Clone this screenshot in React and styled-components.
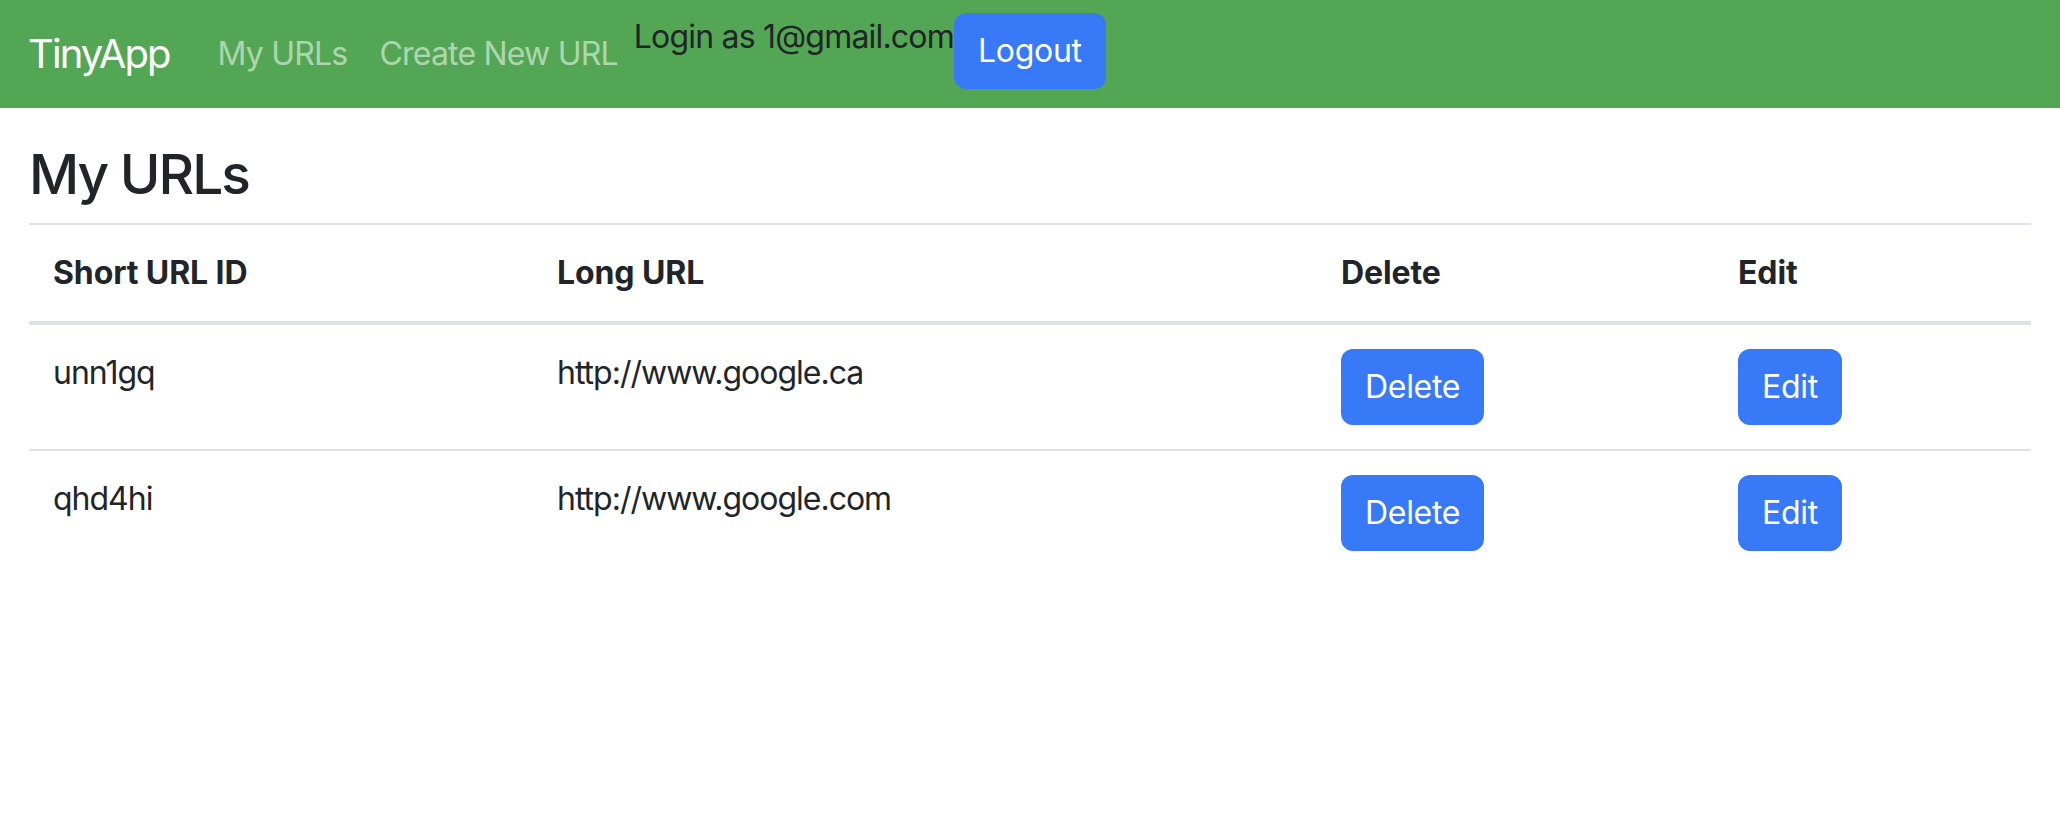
import React from "react"
import styled, { createGlobalStyle } from "styled-components"

const GlobalStyle = createGlobalStyle`
  * {
    box-sizing: border-box;
  }
  body {
    margin: 0;
    background: #fff;
    color: #212529;
    font-family: Inter, "Noto Sans", "Liberation Sans", sans-serif;
    font-size: 32px;
    line-height: 1.5;
  }
`

const Navbar = styled.nav`
  display: flex;
  align-items: center;
  height: 108px;
  padding: 0 28px;
  background: #53a653;
`

const Brand = styled.a`
  font-size: 40px;
  line-height: 1.5;
  color: #fff;
  text-decoration: none;
  margin-right: 32px;
  letter-spacing: -1.9px;
`

const NavLink = styled.a`
  padding: 0 16px;
  color: rgba(255, 255, 255, 0.55);
  text-decoration: none;
  letter-spacing: -0.8px;
`

const Account = styled.div`
  display: flex;
  align-items: flex-start;
  align-self: flex-start;
  margin-top: 13px;
`

const LoginText = styled.span`
  color: #212529;
  letter-spacing: -0.8px;
`

const Button = styled.button`
  font-family: inherit;
  font-size: 32px;
  line-height: 1.5;
  color: #fff;
  background: #3779f6;
  border: 2px solid #3779f6;
  border-radius: 12px;
  padding: 12px 22px;
  cursor: pointer;
  letter-spacing: -0.3px;
`

const Main = styled.main`
  padding: 0 29px;
`

const Title = styled.h3`
  margin: 33px 0 16px;
  font-size: 55px;
  font-weight: 500;
  line-height: 1.2;
  letter-spacing: -2px;
`

const Table = styled.table`
  width: 100%;
  border-collapse: collapse;
  table-layout: fixed;
  border-top: 2px solid #dee2e6;
`

const HeadCell = styled.th`
  width: ${(p) => p.$w}px;
  padding: 24px;
  text-align: left;
  font-weight: 700;
  border-bottom: 4px solid #dee2e6;
  letter-spacing: -0.1px;
`

const Row = styled.tr`
  border-bottom: 2px solid #dee2e6;
  &:last-child {
    border-bottom: 0;
  }
`

const Cell = styled.td`
  padding: 24px;
  vertical-align: top;
  letter-spacing: -1px;
`

const urls = [
  { id: "unn1gq", long: "http://www.google.ca" },
  { id: "qhd4hi", long: "http://www.google.com" },
]

export default function App() {
  return (
    <>
      <GlobalStyle />
      <Navbar>
        <Brand href="#">TinyApp</Brand>
        <NavLink href="#">My URLs</NavLink>
        <NavLink href="#">Create New URL</NavLink>
        <Account>
          <LoginText>Login as 1@gmail.com</LoginText>
          <Button>Logout</Button>
        </Account>
      </Navbar>
      <Main>
        <Title>My URLs</Title>
        <Table>
          <thead>
            <tr>
              <HeadCell $w={504}>Short URL ID</HeadCell>
              <HeadCell $w={784}>Long URL</HeadCell>
              <HeadCell $w={397}>Delete</HeadCell>
              <HeadCell $w={317}>Edit</HeadCell>
            </tr>
          </thead>
          <tbody>
            {urls.map((u) => (
              <Row key={u.id}>
                <Cell>{u.id}</Cell>
                <Cell>{u.long}</Cell>
                <Cell>
                  <Button>Delete</Button>
                </Cell>
                <Cell>
                  <Button>Edit</Button>
                </Cell>
              </Row>
            ))}
          </tbody>
        </Table>
      </Main>
    </>
  )
}
